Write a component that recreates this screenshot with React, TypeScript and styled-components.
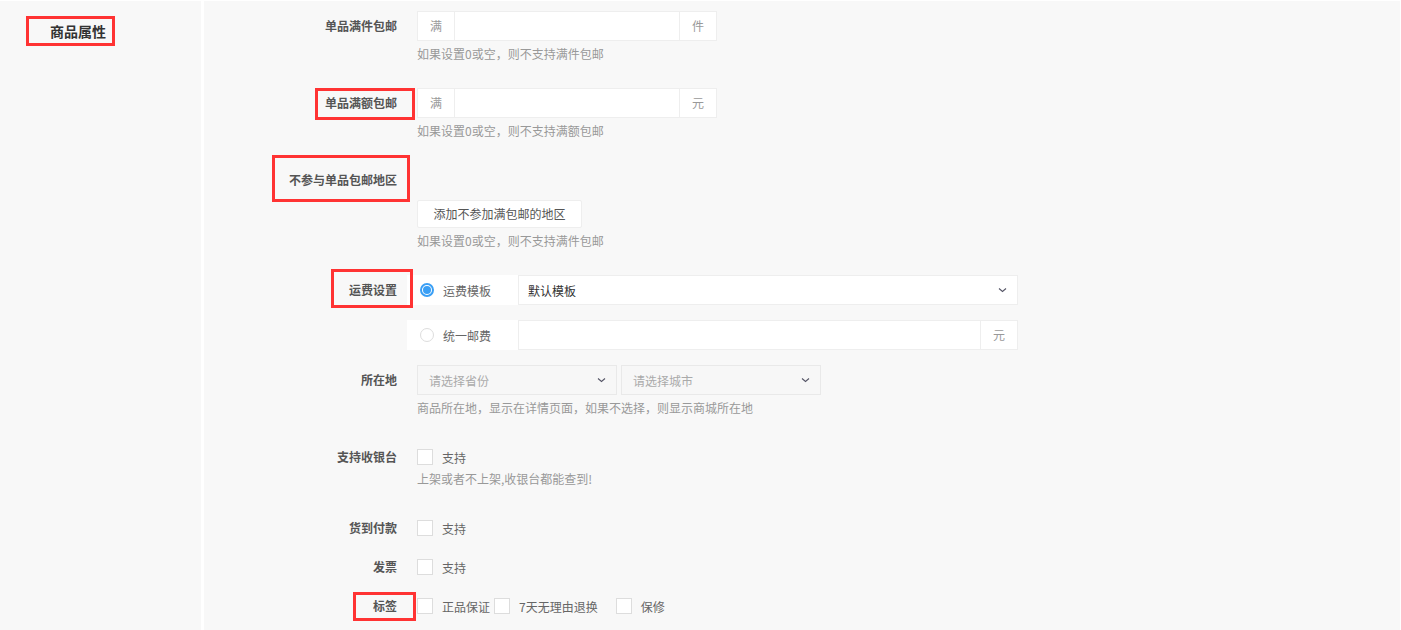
import styled, { createGlobalStyle } from 'styled-components';

const GlobalStyle = createGlobalStyle`
  html, body {
    margin: 0;
    padding: 0;
    background: #ffffff;
  }
  body {
    font-family: "Noto Sans CJK SC", "Noto Sans", "Liberation Sans", sans-serif;
    font-size: 12px;
    color: #666;
  }
`;

type MarkBox = { t: number; r: number; b: number; l: number };

function Chevron() {
  return (
    <svg width="9" height="6" viewBox="0 0 9 6">
      <polyline points="1,1.5 4.5,4.5 8,1.5" fill="none" stroke="#556" strokeWidth="1.1" />
    </svg>
  );
}

function App() {
  return (
    <>
      <GlobalStyle />
      <Page>
        <Side>
          <SideTitle $mark={{ t: -5, r: -9, b: -5, l: -24 }}>商品属性</SideTitle>
        </Side>
        <Main>
          <Row $top={10}>
            <Label>单品满件包邮</Label>
            <Control>
              <Group $w={300}>
                <Addon>满</Addon>
                <Field />
                <Addon $right>件</Addon>
              </Group>
              <Help>如果设置0或空，则不支持满件包邮</Help>
            </Control>
          </Row>

          <Row $top={25}>
            <Label>
              <Marked $mark={{ t: 0, r: -18, b: -2, l: -10 }}>单品满额包邮</Marked>
            </Label>
            <Control>
              <Group $w={300}>
                <Addon>满</Addon>
                <Field />
                <Addon $right>元</Addon>
              </Group>
              <Help>如果设置0或空，则不支持满额包邮</Help>
            </Control>
          </Row>

          <Row $top={25}>
            <Label>
              <Marked $mark={{ t: -10, r: -13, b: -7, l: -17 }}>不参与单品包邮地区</Marked>
            </Label>
            <Control>
              <Spacer />
              <Button>添加不参加满包邮的地区</Button>
              <Help>如果设置0或空，则不支持满件包邮</Help>
            </Control>
          </Row>

          <Row $top={25}>
            <Label>
              <Marked $mark={{ t: -6, r: -16, b: -3, l: -18 }}>运费设置</Marked>
            </Label>
            <Control>
              <RadioLine>
                <RadioOpt>
                  <Radio $on />
                  运费模板
                </RadioOpt>
                <Select $w={500}>
                  <SelectText>默认模板</SelectText>
                  <Chevron />
                </Select>
              </RadioLine>
              <RadioLine $top={15}>
                <RadioOpt>
                  <Radio />
                  统一邮费
                </RadioOpt>
                <Group $w={500}>
                  <Field />
                  <Addon $right>元</Addon>
                </Group>
              </RadioLine>
            </Control>
          </Row>

          <Row $top={15}>
            <Label>所在地</Label>
            <Control>
              <Selects>
                <Select $w={200} $muted>
                  <SelectText $muted>请选择省份</SelectText>
                  <Chevron />
                </Select>
                <Select $w={200} $muted>
                  <SelectText $muted>请选择城市</SelectText>
                  <Chevron />
                </Select>
              </Selects>
              <Help>商品所在地，显示在详情页面，如果不选择，则显示商城所在地</Help>
            </Control>
          </Row>

          <Row $top={28}>
            <Label $short>支持收银台</Label>
            <Control>
              <Checks>
                <Box />
                <CheckText>支持</CheckText>
              </Checks>
              <Help $tight>上架或者不上架,收银台都能查到!</Help>
            </Control>
          </Row>

          <Row $top={28}>
            <Label $short>货到付款</Label>
            <Checks>
              <Box />
              <CheckText>支持</CheckText>
            </Checks>
          </Row>

          <Row $top={15}>
            <Label $short>发票</Label>
            <Checks>
              <Box />
              <CheckText>支持</CheckText>
            </Checks>
          </Row>

          <Row $top={15}>
            <Label $short>
              <Marked $mark={{ t: -2, r: -19, b: -3, l: -20 }}>标签</Marked>
            </Label>
            <Checks>
              <Box />
              <CheckText $after={4}>正品保证</CheckText>
              <Box />
              <CheckText $after={18}>7天无理由退换</CheckText>
              <Box />
              <CheckText>保修</CheckText>
            </Checks>
          </Row>
        </Main>
      </Page>
    </>
  );
}

export default App;

const Page = styled.div`
  display: flex;
  gap: 3px;
  height: 629px;
  margin-top: 1px;
  width: 1400px;
  overflow: hidden;
`;

const Side = styled.div`
  width: 201px;
  flex-shrink: 0;
  background: #f8f8f8;
  padding: 20px 0 0 50px;
  box-sizing: border-box;
`;

const SideTitle = styled.span<{ $mark: MarkBox }>`
  position: relative;
  display: inline-block;
  font-size: 14px;
  line-height: 20px;
  font-weight: bold;
  color: #333;

  &::after {
    content: '';
    position: absolute;
    top: ${(p) => p.$mark.t}px;
    right: ${(p) => p.$mark.r}px;
    bottom: ${(p) => p.$mark.b}px;
    left: ${(p) => p.$mark.l}px;
    border: 3px solid #f33;
  }
`;

const Main = styled.div`
  flex: 1;
  background: #f8f8f8;
  display: flex;
  flex-direction: column;
`;

const Row = styled.div<{ $top: number }>`
  display: flex;
  align-items: flex-start;
  margin-top: ${(p) => p.$top}px;
`;

const Label = styled.div<{ $short?: boolean }>`
  width: 193px;
  flex-shrink: 0;
  text-align: right;
  line-height: ${(p) => (p.$short ? 24 : 30)}px;
  height: ${(p) => (p.$short ? 24 : 30)}px;
  font-weight: bold;
  color: #555;
  margin-right: 20px;
`;

const Marked = styled.span<{ $mark: MarkBox }>`
  position: relative;
  display: inline-block;

  &::after {
    content: '';
    position: absolute;
    top: ${(p) => p.$mark.t}px;
    right: ${(p) => p.$mark.r}px;
    bottom: ${(p) => p.$mark.b}px;
    left: ${(p) => p.$mark.l}px;
    border: 3px solid #f33;
  }
`;

const Control = styled.div`
  display: flex;
  flex-direction: column;
  align-items: flex-start;
`;

const Group = styled.div<{ $w: number }>`
  display: flex;
  width: ${(p) => p.$w}px;
  height: 30px;
  box-sizing: border-box;
  border: 1px solid #eee;
  background: #fff;
`;

const Addon = styled.div<{ $right?: boolean }>`
  width: 36px;
  flex-shrink: 0;
  text-align: center;
  line-height: 28px;
  color: #999;
  ${(p) => (p.$right ? 'border-left: 1px solid #eee;' : 'border-right: 1px solid #eee;')}
`;

const Field = styled.div`
  flex: 1;
`;

const Help = styled.div<{ $tight?: boolean }>`
  margin-top: ${(p) => (p.$tight ? 1 : 4)}px;
  line-height: 18px;
  color: #999;
`;

const Spacer = styled.div`
  height: 35px;
`;

const Button = styled.div`
  width: 165px;
  height: 28px;
  box-sizing: border-box;
  border: 1px solid #eee;
  border-radius: 2px;
  background: #fff;
  color: #555;
  text-align: center;
  line-height: 26px;
`;

const RadioLine = styled.div<{ $top?: number }>`
  display: flex;
  margin-top: ${(p) => p.$top ?? 0}px;
  margin-left: -10px;
`;

const RadioOpt = styled.div`
  width: 111px;
  height: 30px;
  background: #fff;
  display: flex;
  align-items: center;
  padding-left: 13px;
  box-sizing: border-box;
  color: #666;
  gap: 9px;
`;

const Radio = styled.span<{ $on?: boolean }>`
  width: 14px;
  height: 14px;
  border-radius: 50%;
  box-sizing: border-box;
  border: ${(p) => (p.$on ? '2px solid #3a9ff5' : '1px solid #ddd')};
  background: #fff;
  position: relative;
  flex-shrink: 0;

  &::after {
    content: '';
    display: ${(p) => (p.$on ? 'block' : 'none')};
    position: absolute;
    inset: 1px;
    border-radius: 50%;
    background: #3a9ff5;
  }
`;

const Select = styled.div<{ $w: number; $muted?: boolean }>`
  width: ${(p) => p.$w}px;
  height: 30px;
  box-sizing: border-box;
  border: 1px solid ${(p) => (p.$muted ? '#e9e9e9' : '#eee')};
  background: ${(p) => (p.$muted ? '#f7f7f7' : '#fff')};
  display: flex;
  align-items: center;
  justify-content: space-between;
  padding: 0 10px 0 ${(p) => (p.$muted ? 11 : 9)}px;
`;

const SelectText = styled.span<{ $muted?: boolean }>`
  color: ${(p) => (p.$muted ? '#aaa' : '#333')};
`;

const Selects = styled.div`
  display: flex;
  gap: 4px;
`;

const Checks = styled.div`
  display: flex;
  align-items: center;
  height: 24px;
`;

const Box = styled.span`
  width: 16px;
  height: 16px;
  box-sizing: border-box;
  border: 1px solid #ddd;
  background: #fff;
  flex-shrink: 0;
`;

const CheckText = styled.span<{ $after?: number }>`
  margin-left: 9px;
  margin-right: ${(p) => p.$after ?? 0}px;
  color: #666;
`;
